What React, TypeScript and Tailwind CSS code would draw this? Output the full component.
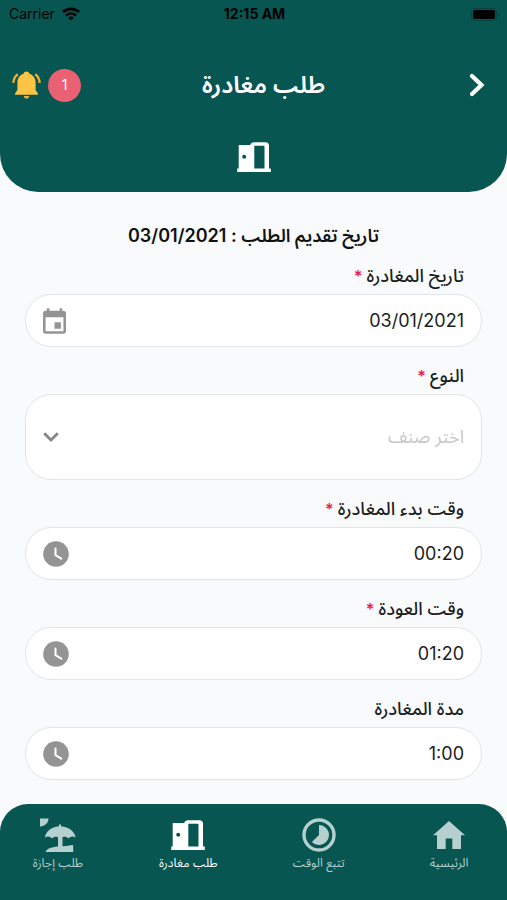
import React from 'react';

type IconProps = { className?: string };

function WifiIcon({ className }: IconProps) {
  return (
    <svg viewBox="0 0 18 14" className={className} fill="none" stroke="currentColor" aria-hidden="true">
      <path d="M1 5C5.600 .8 12.400 .8 17 5" strokeWidth="2.800" />
      <path d="M4 8.500C7 5.800 11 5.800 14 8.500" strokeWidth="2.500" />
      <path d="M9 13.600 6.100 10.700C7.800 9.200 10.200 9.200 11.900 10.700Z" fill="currentColor" stroke="none" />
    </svg>
  );
}

function BatteryIcon({ className }: IconProps) {
  return (
    <svg viewBox="0 0 29 13" className={className} aria-hidden="true">
      <rect x="0.5" y="0.5" width="25" height="12" rx="3.5" fill="none" stroke="#04423f" />
      <rect x="2" y="2" width="22" height="9" rx="1.8" fill="#000" />
      <path d="M27 4.5c1.6.6 1.6 3.4 0 4Z" fill="#04423f" />
    </svg>
  );
}

function BellIcon({ className }: IconProps) {
  return (
    <svg viewBox="0 0 29 28" className={className} aria-hidden="true">
      <path
        d="M14.500 .5c1.500 0 2.600 .9 2.900 2.300 3.800 1.200 6.200 4.500 6.200 8.700v7.200c0 1.300 2.300 2.600 2.300 3.800v1.300H3.100v-1.300c0-1.200 2.300-2.500 2.300-3.800v-7.200c0-4.200 2.400-7.500 6.200-8.700C11.900 1.400 13 .5 14.500 .5Z"
        fill="#fec544"
      />
      <path d="M11.700 25h5.600c-.3 1.700-1.300 2.600-2.800 2.600s-2.500-.9-2.800-2.600Z" fill="#f3ae33" />
      <path d="M5.800 3.200C3.200 5 1.600 7.900 1.300 11.900M23.200 3.200c2.600 1.800 4.200 4.700 4.500 8.700" fill="none" stroke="#f0ab35" strokeWidth="2.300" />
    </svg>
  );
}

function ChevronIcon({ className }: IconProps) {
  return (
    <svg viewBox="0 0 16 24" className={className} fill="none" stroke="currentColor" strokeWidth="4.200" strokeLinecap="round" aria-hidden="true">
      <path d="M3 3 12.500 12 3 21" />
    </svg>
  );
}

function ChevronDownIcon({ className }: IconProps) {
  return (
    <svg viewBox="0 0 16 10" className={className} fill="none" stroke="currentColor" strokeWidth="2.700" aria-hidden="true">
      <path d="M1.200 1.200 8 8l6.800-6.800" />
    </svg>
  );
}

function DoorIcon({ className }: IconProps) {
  return (
    <svg viewBox="0 0 34 30" className={className} aria-hidden="true">
      <path
        fillRule="evenodd"
        fill="currentColor"
        d="M1.700 3h11.500C13.800 1.200 15.200 .2 17 .2h11.500c2.200 0 3.500 1.300 3.500 3.500v22.800h1.800V30H.2v-3.500h1.500ZM17.300 3.800v22.700h10.200V4.800c0-.7-.3-1-1-1ZM7.200 12.700a2 2 0 1 0 0 4 2 2 0 0 0 0-4Z"
      />
    </svg>
  );
}

function CalendarIcon({ className }: IconProps) {
  return (
    <svg viewBox="3 1 18 20" className={className} fill="currentColor" aria-hidden="true">
      <path d="M17 12h-5v5h5v-5zM16 1v2H8V1H6v2H5c-1.110 0-1.990.9-1.990 2L3 19c0 1.100.89 2 2 2h14c1.100 0 2-.9 2-2V5c0-1.100-.9-2-2-2h-1V1h-2zm3 18H5V8h14v11z" />
    </svg>
  );
}

function ClockIcon({ className }: IconProps) {
  return (
    <svg viewBox="0 0 26 26" className={className} aria-hidden="true">
      <circle cx="13" cy="13" r="12.800" fill="currentColor" />
      <path d="M12.500 7.500v6.700l5.800 3.500" fill="none" stroke="#fff" strokeWidth="2" strokeLinecap="round" strokeLinejoin="round" />
    </svg>
  );
}

function HomeIcon({ className }: IconProps) {
  return (
    <svg viewBox="0 0 32 28" className={className} fill="currentColor" aria-hidden="true">
      <path d="M16 0 32 14.300h-4V28h-8.700V17.500h-6.600V28H4V14.300H0Z" />
    </svg>
  );
}

function TimelapseIcon({ className }: IconProps) {
  return (
    <svg viewBox="0 0 34 34" className={className} aria-hidden="true">
      <circle cx="17" cy="17" r="15" fill="none" stroke="currentColor" strokeWidth="3.400" />
      <path d="M17 7a10 10 0 1 1-7.100 17.100L17 17Z" fill="currentColor" />
    </svg>
  );
}

function BeachIcon({ className }: IconProps) {
  return (
    <svg viewBox="0 0 36 34" className={className} fill="currentColor" aria-hidden="true">
      <path d="M0 .5h8.500C8.500 4.800 4.800 8.500 0 8.500Z" />
      <path d="M19 8.300V6.500h2v1.800c8 .6 13.500 5.200 14.700 11.300-2.800-1.800-5.400-1.300-7.200 1-1.600-1.700-3.800-2.200-6-1.300V28.300c3.500.2 6.800-1.300 10.700-1.300v7H5.500c1-3 5.500-5 12.500-5.500v-9.200c-2.200-.9-4.400-.4-6 1.300-1.800-2.300-4.400-2.800-7.200-1C6 13.500 11 8.900 19 8.300Z" />
    </svg>
  );
}

function FieldLabel({ id, text, required }: { id: string; text: string; required?: boolean }) {
  return (
    <label htmlFor={id} className="block px-[18px] text-lg leading-7 font-medium text-[#1c1d1e]">
      {text}
      {required && <span className="text-base leading-none font-semibold text-[#f0194d]"> *</span>}
    </label>
  );
}

type FieldProps = { id: string; label: string; value: string; required?: boolean; icon: React.ReactNode };

function Field({ id, label, value, required, icon }: FieldProps) {
  return (
    <div className="flex flex-col gap-1">
      <FieldLabel id={id} text={label} required={required} />
      <div className="flex h-[53px] items-center rounded-[26px] border border-[#e3e4e5] bg-white px-[17px] text-[#949494]">
        <input id={id} defaultValue={value} className="min-w-0 flex-1 bg-transparent text-lg text-[#1c1d1e] outline-none" />
        {icon}
      </div>
    </div>
  );
}

function NavItem({ label, active, children }: { label: string; active?: boolean; children: React.ReactNode }) {
  return (
    <a
      href="#"
      aria-current={active ? 'page' : undefined}
      className={
        active
          ? 'flex w-[88px] flex-col items-center gap-[3px] text-white'
          : 'flex w-[88px] flex-col items-center gap-[3px] text-[#b5d0cf]'
      }
    >
      <span className="flex h-[34px] items-center">{children}</span>
      <span className="text-xs leading-4">{label}</span>
    </a>
  );
}

export default function App() {
  return (
    <div dir="rtl" className="flex min-h-screen flex-col bg-[#f9fafc] font-['Inter','Noto_Sans_Arabic','Noto_Sans','DejaVu_Sans',sans-serif]">
      <header className="rounded-b-[38px] bg-[#075652] pb-5 text-white">
        <div dir="ltr" className="grid h-7 grid-cols-3 items-center pr-[7px] pl-[9px] text-sm text-black">
          <span className="flex items-center gap-[7px]">
            Carrier
            <WifiIcon className="h-[14px] w-[18px]" />
          </span>
          <span className="text-center font-bold">12:15 AM</span>
          <BatteryIcon className="h-[13px] w-[29px] justify-self-end" />
        </div>
        <div className="mt-9 grid h-[42px] grid-cols-[60px_1fr_80px] items-center px-3">
          <button type="button" aria-label="رجوع" className="flex h-10 items-center pr-[10px]">
            <ChevronIcon className="h-6 w-4" />
          </button>
          <h1 className="text-center text-2xl font-semibold">طلب مغادرة</h1>
          <button type="button" aria-label="الإشعارات" className="flex items-center gap-[7px] justify-self-end">
            <span className="flex size-[33px] items-center justify-center rounded-full bg-[#ea6173] text-sm">1</span>
            <BellIcon className="h-7 w-[29px]" />
          </button>
        </div>
        <DoorIcon className="mx-auto mt-9 h-[30px] w-[34px]" />
      </header>

      <main className="flex-1 px-[25px] pt-[30px]">
        <p className="text-center text-lg leading-7 font-semibold text-[#111]">
          تاريخ تقديم الطلب : <bdi>03/01/2021</bdi>
        </p>
        <form className="mt-3 flex flex-col gap-[15px]">
          <Field id="date" label="تاريخ المغادرة" value="03/01/2021" required icon={<CalendarIcon className="h-[26px] w-[23px]" />} />
          <div className="flex flex-col gap-1">
            <FieldLabel id="type" text="النوع" required />
            <div className="relative">
              <select
                id="type"
                defaultValue=""
                className="block h-[86px] w-full appearance-none rounded-[26px] border border-[#e3e4e5] bg-white px-[17px] text-lg text-[#c8c8c8] outline-none"
              >
                <option value="">اختر صنف</option>
              </select>
              <ChevronDownIcon className="pointer-events-none absolute inset-y-0 left-[18px] my-auto h-[10px] w-4 text-[#858585]" />
            </div>
          </div>
          <Field id="start" label="وقت بدء المغادرة" value="00:20" required icon={<ClockIcon className="size-[26px]" />} />
          <Field id="return" label="وقت العودة" value="01:20" required icon={<ClockIcon className="size-[26px]" />} />
          <Field id="duration" label="مدة المغادرة" value="1:00" icon={<ClockIcon className="size-[26px]" />} />
        </form>
      </main>

      <nav className="mt-6 flex h-24 items-start justify-between rounded-t-[28px] bg-[#075652] px-[14px] pt-[14px]">
        <NavItem label="الرئيسية">
          <HomeIcon className="h-7 w-8" />
        </NavItem>
        <NavItem label="تتبع الوقت">
          <TimelapseIcon className="size-[34px]" />
        </NavItem>
        <NavItem label="طلب مغادرة" active>
          <DoorIcon className="h-[30px] w-[34px]" />
        </NavItem>
        <NavItem label="طلب إجازة">
          <BeachIcon className="h-[34px] w-9" />
        </NavItem>
      </nav>
    </div>
  );
}
